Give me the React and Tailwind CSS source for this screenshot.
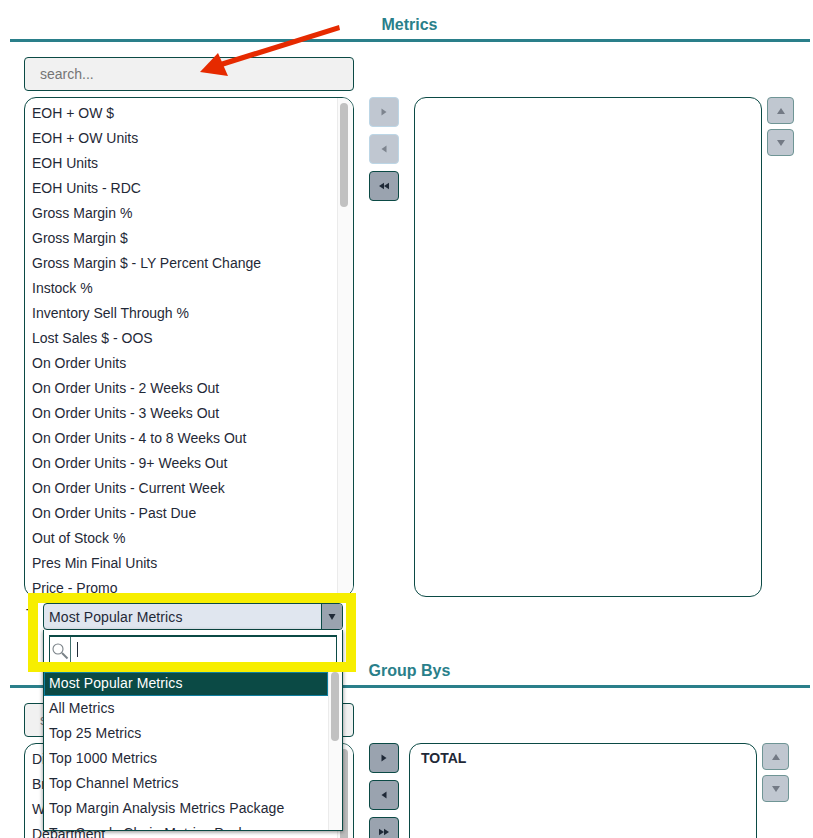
import React from 'react';

const metrics = [
  'EOH + OW $',
  'EOH + OW Units',
  'EOH Units',
  'EOH Units - RDC',
  'Gross Margin %',
  'Gross Margin $',
  'Gross Margin $ - LY Percent Change',
  'Instock %',
  'Inventory Sell Through %',
  'Lost Sales $ - OOS',
  'On Order Units',
  'On Order Units - 2 Weeks Out',
  'On Order Units - 3 Weeks Out',
  'On Order Units - 4 to 8 Weeks Out',
  'On Order Units - 9+ Weeks Out',
  'On Order Units - Current Week',
  'On Order Units - Past Due',
  'Out of Stock %',
  'Pres Min Final Units',
  'Price - Promo',
];

const groupBys = ['Division', 'Brand', 'Week', 'Department'];

const metricSets = [
  'All Metrics',
  'Top 25 Metrics',
  'Top 1000 Metrics',
  'Top Channel Metrics',
  'Top Margin Analysis Metrics Package',
  'Top Supply Chain Metrics Package',
];

const icons = {
  right: '3.5,2.5 8.5,6 3.5,9.5',
  left: '8.5,2.5 3.5,6 8.5,9.5',
  up: '2,9 6,3 10,9',
  down: '2,3 6,9 10,3',
  caret: '2.5,3 9.5,3 6,9',
};

function Glyph({ name }) {
  if (name === 'rewind') {
    return (
      <svg width="12" height="12" viewBox="0 0 12 12">
        <polygon points="6,2.7 1,6 6,9.3" fill="currentColor" />
        <polygon points="11,2.7 6,6 11,9.3" fill="currentColor" />
      </svg>
    );
  }
  if (name === 'forward') {
    return (
      <svg width="12" height="12" viewBox="0 0 12 12">
        <polygon points="1,2.7 6,6 1,9.3" fill="currentColor" />
        <polygon points="6,2.7 11,6 6,9.3" fill="currentColor" />
      </svg>
    );
  }
  return (
    <svg width="12" height="12" viewBox="0 0 12 12">
      <polygon points={icons[name]} fill="currentColor" />
    </svg>
  );
}

function MoveButton({ icon, disabled }) {
  return (
    <button
      type="button"
      className={
        disabled
          ? 'flex h-[30px] w-[30px] items-center justify-center rounded border border-[#bcd6e6] bg-[#c0c7d1] text-[#7d848e]'
          : 'flex h-[30px] w-[30px] items-center justify-center rounded border border-[#0b4a45] bg-[#9aa3af] text-[#1f2937]'
      }
    >
      <Glyph name={icon} />
    </button>
  );
}

function OrderButton({ icon }) {
  return (
    <button
      type="button"
      className="flex h-[27px] w-[27px] items-center justify-center rounded border border-[#6f9595] bg-[#c0c7d0] text-[#737a85]"
    >
      <Glyph name={icon} />
    </button>
  );
}

function Section({ title, items, moveButtons, boxClass, orderClass, thumbClass }) {
  return (
    <section>
      <div className="mr-[3px] ml-[10px] border-b-[3px] border-[#2a7f8a] pr-px pb-[5px] text-center text-base leading-[18px] font-bold text-[#2a7f8a]">
        {title}
      </div>
      <div className="flex items-start pt-[15px] pl-[24px]">
        <div className="flex w-[330px] flex-col gap-[6px]">
          <input
            placeholder="search..."
            className="h-[34px] rounded border border-[#0b4a45] bg-[#f1f1f1] px-[15px] text-sm text-[#374151] outline-none placeholder:text-[#757575]"
          />
          <div className="flex h-[500px] overflow-hidden rounded-xl border border-[#0b4a45]">
            <ul className="flex-1 pt-[3px] pl-[7px]">
              {items.map((item) => (
                <li key={item} className="h-[25px] text-sm leading-[25px] text-[#1f2937]">
                  {item}
                </li>
              ))}
            </ul>
            <div className="w-[16px] border-l border-[#ebebeb] bg-[#fafafa] pt-[5px] pl-[2px]">
              <div className={thumbClass} />
            </div>
          </div>
        </div>
        <div className="mt-[40px] ml-[15px] flex flex-col gap-[7px]">{moveButtons}</div>
        <div className={boxClass}>
          {title === 'Group Bys' && <p className="text-sm leading-[25px] font-bold text-[#1f2937]">TOTAL</p>}
        </div>
        <div className={orderClass}>
          <OrderButton icon="up" />
          <OrderButton icon="down" />
        </div>
      </div>
    </section>
  );
}

function MetricSetDropdown() {
  return (
    <div className="absolute top-[603px] left-[43px] w-[300px]">
      <div className="flex h-[27px] overflow-hidden rounded-sm border border-[#0b4a45] bg-[#e0e6ef]">
        <span className="flex-1 pl-[5px] text-sm leading-[26px] tracking-[0.1px] text-[#1f2937]">Most Popular Metrics</span>
        <span className="flex w-[21px] items-center justify-center border-l border-[#0b4a45] bg-[#9aa3af] text-[#1f2937]">
          <Glyph name="caret" />
        </span>
      </div>
      <div className="h-[201px] overflow-hidden border-x border-b border-[#0b4a45] bg-white shadow-[0_1px_4px_rgba(0,0,0,0.45)]">
        <div className="px-[5px] pt-[5px]">
          <div className="flex h-[37px] border-x border-t-2 border-[#0b4a45]">
            <span className="flex h-[28px] w-[21px] items-center justify-center border-r border-[#3f6f6c]">
              <svg width="18" height="18" viewBox="0 0 18 18" fill="none" stroke="#7a8288" strokeWidth="1.1">
                <circle cx="7" cy="7" r="5" />
                <path d="M11 11l5.5 5.5" strokeWidth="2" />
              </svg>
            </span>
            <span className="mt-[5px] ml-[6px] h-[15px] w-px bg-[#1f2937]" />
          </div>
        </div>
        <div className="flex">
          <ul className="w-[284px]">
            <li className="h-[24px] border border-[#0f7f9f] bg-[#0b4a45] pl-[4px] text-sm leading-[20px] tracking-[0.1px] text-white">
              Most Popular Metrics
            </li>
            {metricSets.map((item) => (
              <li key={item} className="h-[25px] pl-[5px] text-sm leading-[25px] tracking-[0.1px] text-[#1f2937]">
                {item}
              </li>
            ))}
          </ul>
          <div className="flex-1 border-l border-[#ebebeb] bg-[#fafafa] pl-[2px]">
            <div className="h-[69px] w-[8px] rounded-full bg-[#c1c1c1]" />
          </div>
        </div>
      </div>
    </div>
  );
}

export default function App() {
  return (
    <div className="relative h-[838px] overflow-hidden bg-white pt-[16px] font-['Liberation_Sans',Arial,sans-serif]">
      <Section
        title="Metrics"
        items={metrics}
        thumbClass="h-[104px] w-[8px] rounded-full bg-[#c1c1c1]"
        boxClass="mt-[40px] ml-[15px] h-[500px] w-[348px] rounded-xl border border-[#0b4a45]"
        orderClass="mt-[40px] ml-[5px] flex flex-col gap-[5px]"
        moveButtons={
          <>
            <MoveButton icon="right" disabled />
            <MoveButton icon="left" disabled />
            <MoveButton icon="rewind" />
          </>
        }
      />
      <div className="pt-[9px] pl-[26px] text-sm leading-[16px] text-[#1f2937]">T</div>
      <div className="mt-[40px]">
        <Section
          title="Group Bys"
          items={groupBys}
          thumbClass="h-[300px] w-[8px] rounded-full bg-[#bdbdbd]"
          boxClass="mt-[40px] ml-[10px] h-[500px] w-[348px] rounded-xl border border-[#0b4a45] pt-[2px] pl-[11px]"
          orderClass="mt-[40px] ml-[5px] flex flex-col gap-[5px]"
          moveButtons={
            <>
              <MoveButton icon="right" />
              <MoveButton icon="left" />
              <MoveButton icon="forward" />
            </>
          }
        />
      </div>

      <MetricSetDropdown />

      <div className="absolute top-[593px] left-[28px] h-[79px] w-[328px] border-[10px] border-[#f7ee00]" />

      <svg className="absolute top-0 left-0" width="813" height="100" viewBox="0 0 813 100">
        <polygon points="339,25 340,30 222,67 220,62" fill="#e62a00" />
        <polygon points="200,72 218,53 228,76" fill="#e62a00" />
      </svg>
    </div>
  );
}
